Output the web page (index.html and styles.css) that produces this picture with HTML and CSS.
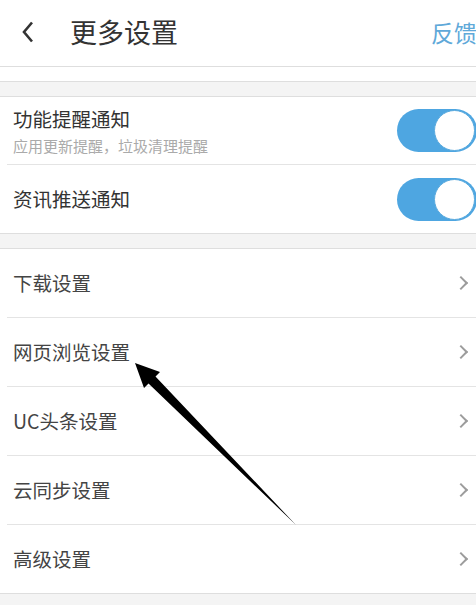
FILE: index.html
```html
<!DOCTYPE html>
<html lang="zh-CN">

<head>
  <meta charset="UTF-8">
  <title>更多设置</title>
  <link rel="stylesheet" href="styles.css">
</head>

<body>
  <div class="page">
    <div class="top-bar">
      <span class="back">
        <svg width="14" height="22" viewBox="0 0 14 22"><path d="M11 1.5 L3 11 L11 20.5" fill="none" stroke="#333" stroke-width="2.6"/></svg>
      </span>
      <span class="title">更多设置</span>
      <span class="feedback">反馈</span>
    </div>
    <div class="blank"></div>

    <ul class="group">
      <li class="item item-two">
        <div class="text">
          <p class="name">功能提醒通知</p>
          <p class="desc">应用更新提醒，垃圾清理提醒</p>
        </div>
        <span class="switch on"><i></i></span>
      </li>
      <li class="item">
        <div class="text">
          <p class="name">资讯推送通知</p>
        </div>
        <span class="switch on"><i></i></span>
      </li>
    </ul>

    <ul class="group group-link">
      <li class="item link"><p class="name">下载设置</p><span class="arrow"></span></li>
      <li class="item link"><p class="name">网页浏览设置</p><span class="arrow"></span></li>
      <li class="item link"><p class="name">UC头条设置</p><span class="arrow"></span></li>
      <li class="item link"><p class="name">云同步设置</p><span class="arrow"></span></li>
      <li class="item link"><p class="name">高级设置</p><span class="arrow"></span></li>
    </ul>
  </div>

  <svg class="pointer" width="476" height="605" viewBox="0 0 476 605">
    <polygon points="135,363 160,372 155.5,376.5 296,525 148.5,383.5 144,388" fill="#000"/>
  </svg>
</body>

</html>
```

FILE: styles.css
```css
* {
  margin: 0;
  padding: 0;
  box-sizing: border-box;
}

html,
body {
  width: 100%;
  height: 100%;
}

body {
  position: relative;
  overflow: hidden;
  background-color: #f4f4f4;
  font-family: "Noto Sans CJK SC", "Noto Sans", sans-serif;
  color: #333;
}

ul {
  list-style: none;
}

.top-bar {
  display: flex;
  align-items: center;
  height: 67px;
  background-color: #fff;
  border-bottom: 1px solid #dedede;
}

.top-bar .back {
  display: flex;
  width: 70px;
  padding-left: 21px;
  padding-bottom: 2px;
}

.top-bar .title {
  font-size: 27px;
  line-height: 36px;
  color: #333;
  padding-bottom: 2px;
}

.top-bar .feedback {
  margin-left: auto;
  margin-right: -1px;
  font-size: 23px;
  line-height: 30px;
  color: #5fa9d9;
  white-space: nowrap;
  padding-bottom: 2px;
}

.blank {
  height: 15px;
  background-color: #fff;
  border-bottom: 1px solid #dedede;
}

.group {
  margin-top: 14px;
  background-color: #fff;
  border-top: 1px solid #dedede;
  border-bottom: 1px solid #dedede;
}

.item {
  position: relative;
  display: flex;
  align-items: center;
  height: 68px;
  padding-left: 13px;
}

.item + .item:before {
  content: '';
  position: absolute;
  left: 7px;
  right: 0;
  top: -1px;
  border-top: 1px solid #e4e4e4;
}

.item + .item {
  margin-top: 1px;
}

.item-two {
  height: 67px;
}

.item .text {
  flex: 1;
}

.item .name {
  font-size: 19.5px;
  line-height: 26px;
  color: #333;
}

.item .desc {
  margin-top: 4px;
  font-size: 15px;
  line-height: 20px;
  color: #aaa;
}

.group-link .item .name {
  flex: 1;
  color: #444;
}

.switch {
  position: relative;
  display: block;
  width: 80px;
  height: 43px;
  margin-right: -1px;
  border-radius: 22px;
  background-color: #4ea6e1;
}

.switch i {
  position: absolute;
  top: 1px;
  right: 2px;
  width: 41px;
  height: 41px;
  border-radius: 50%;
  background-color: #fff;
  border: 1.5px solid #5aaade;
}

.arrow {
  width: 10px;
  height: 10px;
  margin-right: 10px;
  border-top: 2.5px solid #9c9c9c;
  border-right: 2.5px solid #9c9c9c;
  transform: rotate(45deg);
}

.pointer {
  position: absolute;
  left: 0;
  top: 0;
}
```
